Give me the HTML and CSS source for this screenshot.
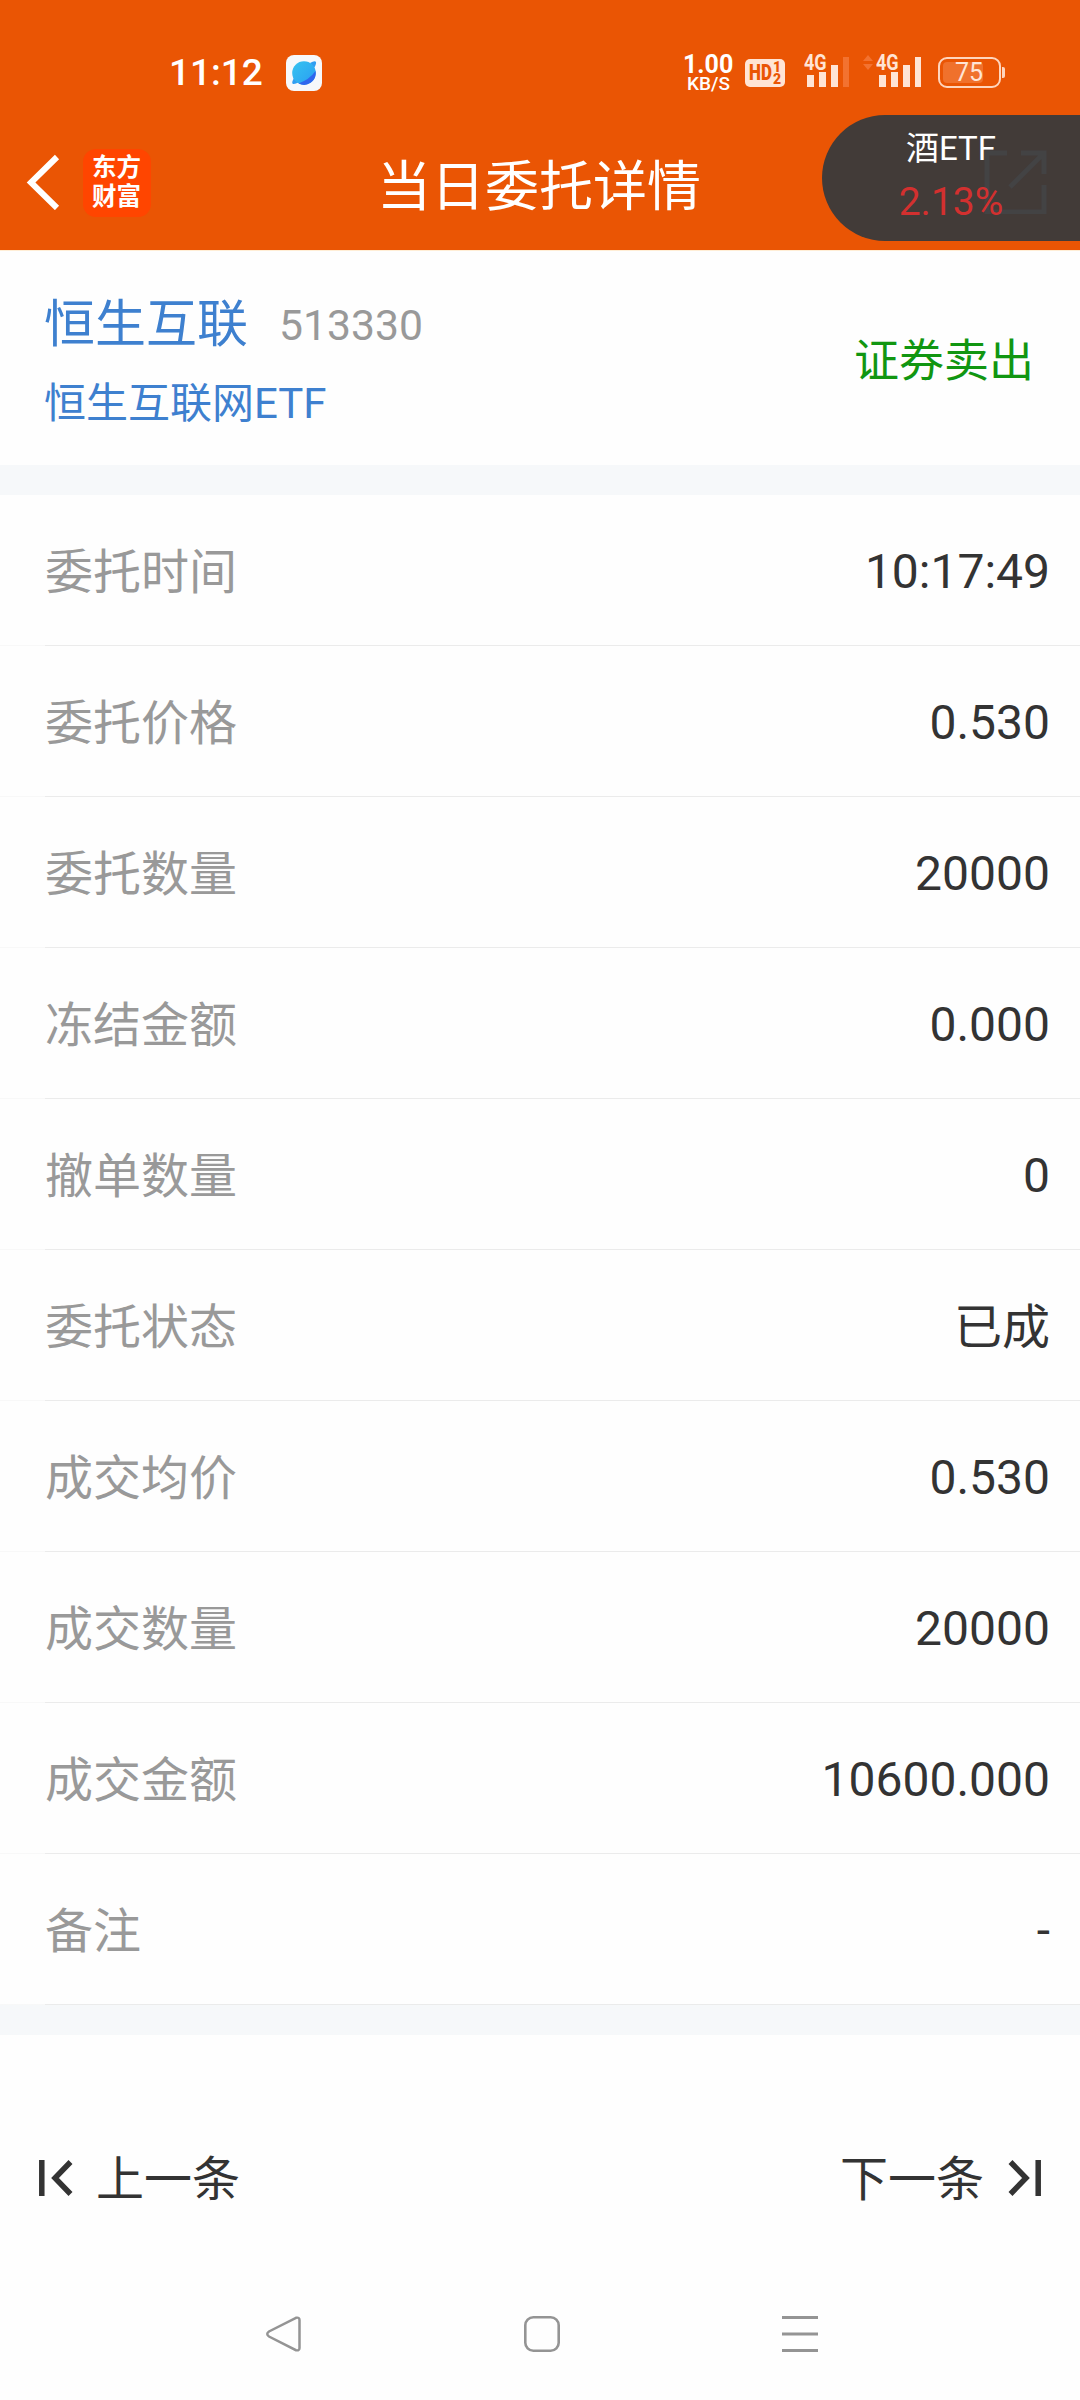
FILE: index.html
```
<!DOCTYPE html>
<html lang="zh-CN">
<head>
    <meta charset="UTF-8">
    <meta name="viewport" content="width=device-width, initial-scale=1.0">
    <title>当日委托详情</title>
    <link rel="stylesheet" href="styles.css">
</head>
<body>
    <header class="header">
        <div class="status-bar">
            <span class="clock">11:12</span>
            <svg class="browser-icon" width="36" height="36" viewBox="0 0 36 36">
                <defs>
                    <linearGradient id="planet" x1="0" y1="0" x2="1" y2="1">
                        <stop offset="0" stop-color="#35c3f0"/>
                        <stop offset="1" stop-color="#2a9df2"/>
                    </linearGradient>
                </defs>
                <rect width="36" height="36" rx="8" fill="#f6f8fb"/>
                <path d="M24 8q5-3 6-1q.5 2-2 6zM8 23q-3 5-1 6q2 .5 6-2z" fill="#2f9df2"/>
                <circle cx="18" cy="18" r="11.8" fill="url(#planet)"/>
                <path d="M29.6 16A11.8 11.8 0 0 1 12.500 28.400Q23 25 29.600 16z" fill="#2f66ee"/>
            </svg>
            <div class="net-speed">
                <span class="speed">1.00</span>
                <span class="unit">KB/S</span>
            </div>
            <div class="hd">
                <span>HD</span>
                <div class="hd-nums"><i>1</i><i>2</i></div>
            </div>
            <div class="signal">
                <span>4G</span>
                <svg width="46" height="32" viewBox="0 0 46 32">
                    <path d="M3 20h7v12H3zM15 17h7v15h-7zM27 10h7v22h-7z" fill="#ffe4d5"/>
                    <path d="M39 2h6v30h-6z" fill="#f37230"/>
                </svg>
            </div>
            <svg class="arrows" width="10" height="16" viewBox="0 0 10 16">
                <path d="M5 0l5 6H0zM0 9h10l-5 6z" fill="#f37230"/>
            </svg>
            <div class="signal second">
                <span>4G</span>
                <svg width="46" height="32" viewBox="0 0 46 32">
                    <path d="M3 20h7v12H3zM15 17h7v15h-7zM27 10h7v22h-7zM39 2h6v30h-6z" fill="#ffe4d5"/>
                </svg>
            </div>
            <div class="battery"><span>75</span></div>
        </div>

        <div class="title-bar">
            <svg class="back" width="36" height="56" viewBox="0 0 36 56">
                <path d="M31 3L5 28.500L31 54" fill="none" stroke="#fff" stroke-width="6"/>
            </svg>
            <div class="logo">东方<br>财富</div>
            <h1>当日委托详情</h1>
        </div>

        <div class="float-quote">
            <svg class="share" width="64" height="64" viewBox="0 0 64 64">
                <path d="M23 3H3v59h57V35M37 3h23v21M60 3L26 37" fill="none" stroke="#434344" stroke-width="5"/>
            </svg>
            <span class="quote-name">酒ETF</span>
            <span class="quote-rate">2.13%</span>
        </div>
    </header>

    <section class="stock">
        <div>
            <div class="stock-line">
                <span class="stock-name">恒生互联</span>
                <span class="stock-code">513330</span>
            </div>
            <div class="stock-full">恒生互联网ETF</div>
        </div>
        <div class="side">证券卖出</div>
    </section>

    <ul class="detail">
        <li><span>委托时间</span><b>10:17:49</b></li>
        <li><span>委托价格</span><b>0.530</b></li>
        <li><span>委托数量</span><b>20000</b></li>
        <li><span>冻结金额</span><b>0.000</b></li>
        <li><span>撤单数量</span><b>0</b></li>
        <li><span>委托状态</span><b class="state">已成</b></li>
        <li><span>成交均价</span><b>0.530</b></li>
        <li><span>成交数量</span><b>20000</b></li>
        <li><span>成交金额</span><b>10600.000</b></li>
        <li><span>备注</span><b>-</b></li>
    </ul>

    <div class="pager">
        <a class="prev">
            <svg width="34" height="36" viewBox="0 0 34 36">
                <path d="M2.800 0v36M31.500 2L16 18L31.500 34" fill="none" stroke="#333" stroke-width="5.500"/>
            </svg>
            <span>上一条</span>
        </a>
        <a class="next">
            <span>下一条</span>
            <svg width="34" height="36" viewBox="0 0 34 36">
                <path d="M30.200 0v36M2.500 2L18 18L2.500 34" fill="none" stroke="#333" stroke-width="5.500"/>
            </svg>
        </a>
    </div>

    <nav class="system-nav">
        <svg width="36" height="36" viewBox="0 0 36 36">
            <path d="M30 1.800L3 15.500Q-.5 18 3 20.500L30 34.200Q33.500 35 33.500 32V4Q33.500 1 30 1.800z" fill="none" stroke="#949494" stroke-width="2.500"/>
        </svg>
        <svg width="36" height="36" viewBox="0 0 36 36">
            <rect x="1.300" y="1.300" width="33.400" height="33.400" rx="8" fill="none" stroke="#949494" stroke-width="2.600"/>
        </svg>
        <svg width="36" height="36" viewBox="0 0 36 36">
            <path d="M0 1.500h36M0 18h36M0 34.500h36" stroke="#949494" stroke-width="3"/>
        </svg>
    </nav>
</body>
</html>
```
FILE: styles.css
```
* {
    box-sizing: border-box;
}

body, html {
    margin: 0;
    padding: 0;
    height: 2400px;
    overflow: hidden;
    font-family: Roboto, 'Noto Sans CJK SC', sans-serif;
    color: #333;
    background: #fefefe;
}

svg {
    display: block;
    flex-shrink: 0;
}

/* Header */
.header {
    position: relative;
    height: 251px;
    background: #ea5504;
    border-bottom: 1px solid #ffeed6;
    color: #fff;
}

.status-bar {
    display: flex;
    height: 115px;
    padding: 55px 0 0 169px;
}

.clock {
    width: 117px;
    font-size: 37px;
    font-weight: 500;
    line-height: 36px;
    white-space: nowrap;
}

.net-speed {
    width: 49px;
    margin-left: 361px;
    text-align: center;
    white-space: nowrap;
}

.speed {
    display: block;
    font-size: 25px;
    font-weight: 700;
    line-height: 19px;
}

.unit {
    display: block;
    padding-left: 2px;
    font-size: 19px;
    font-weight: 500;
    line-height: 19px;
}

.hd {
    display: flex;
    width: 40px;
    height: 28px;
    margin: 4px 0 0 13px;
    padding-left: 4px;
    border-radius: 5px;
    background: #ffe4d5;
    color: #ea5504;
    font-size: 22px;
    font-weight: 900;
    line-height: 28px;
}

.hd span {
    width: 24px;
    transform: scaleX(0.77);
    transform-origin: left;
}

.hd-nums i {
    display: block;
    font-size: 14px;
    font-style: normal;
    line-height: 12px;
}

.hd-nums i:first-child {
    margin-top: 2px;
}

.signal {
    position: relative;
    margin-left: 19px;
}

.signal span {
    position: absolute;
    top: -2px;
    left: 0;
    font-size: 22px;
    font-weight: 700;
    line-height: 20px;
    color: #ffe4d5;
    transform: scaleX(0.82);
    transform-origin: left;
}

.arrows {
    margin-left: 13px;
}

.signal.second {
    margin-left: 3px;
}

.battery {
    position: relative;
    width: 63px;
    height: 31px;
    margin: 2px 0 0 16px;
    padding: 3px;
    border: 2px solid #ffd5bd;
    border-radius: 9px;
}

.battery::after {
    content: '';
    position: absolute;
    top: 8px;
    right: -6px;
    width: 3px;
    height: 11px;
    border-radius: 0 2px 2px 0;
    background: #ffd5bd;
}

.battery span {
    display: block;
    width: 40px;
    height: 21px;
    padding-left: 12px;
    border-radius: 4px;
    background: #f0712c;
    font-size: 25px;
    line-height: 21px;
    color: #ffe4d5;
}

.title-bar {
    display: flex;
    align-items: flex-start;
    height: 135px;
    padding-top: 34px;
}

.back {
    margin: 5px 0 0 26px;
}

.logo {
    width: 68px;
    height: 68px;
    margin-left: 21px;
    padding: 4px 0 0 9px;
    border-radius: 13px;
    background: #ff4500;
    font-size: 24.5px;
    font-weight: 700;
    line-height: 29px;
    white-space: nowrap;
}

.title-bar h1 {
    margin: 7px 0 0 226px;
    font-size: 54px;
    font-weight: 400;
    line-height: 64px;
}

/* Floating quote */
.float-quote {
    position: absolute;
    top: 115px;
    right: 0;
    width: 258px;
    height: 126px;
    padding: 14px 0 0 0;
    border-radius: 63px 0 0 63px;
    background: #423b38;
    text-align: center;
}

.float-quote span {
    display: block;
    position: relative;
    white-space: nowrap;
}

.share {
    position: absolute;
    top: 35px;
    left: 162px;
}

.quote-name {
    font-size: 33px;
    line-height: 40px;
}

.quote-rate {
    margin-top: 9px;
    font-size: 39px;
    line-height: 48px;
    color: #d3302f;
}

/* Stock summary */
.stock {
    display: flex;
    justify-content: space-between;
    height: 214px;
    padding: 42px 46px 0 44px;
}

.stock-line {
    display: flex;
    align-items: baseline;
    line-height: 64px;
}

.stock-name {
    font-size: 51px;
    color: #3e80cf;
}

.stock-code {
    position: relative;
    top: -2px;
    margin-left: 31px;
    font-size: 42.7px;
    color: #999;
}

.stock-full {
    margin-top: 17px;
    font-size: 42px;
    line-height: 56px;
    color: #3e80cf;
}

.side {
    margin-top: 37px;
    font-size: 45px;
    line-height: 64px;
    color: #119611;
}

/* Order details */
.detail {
    list-style: none;
    margin: 0;
    padding: 0;
    border-top: 30px solid #f6f8fa;
    border-bottom: 30px solid #f6f8fa;
}

.detail li {
    position: relative;
    display: flex;
    justify-content: space-between;
    align-items: center;
    height: 151px;
    padding: 3px 30px 0 45px;
    font-size: 48px;
    line-height: 64px;
}

.detail li::after {
    content: '';
    position: absolute;
    left: 0;
    right: 0;
    bottom: 0;
    height: 1px;
    background: linear-gradient(to right, #f8f8f8 45px, #ebebeb 45px);
}

.detail span {
    padding-top: 2px;
    color: #999;
}

.detail b {
    font-weight: 400;
}

.detail .state {
    padding-top: 2px;
}

/* Prev / next */
.pager {
    display: flex;
    justify-content: space-between;
    padding: 111px 38px 0 39px;
}

.pager a {
    display: flex;
    align-items: center;
    font-size: 48px;
}

.pager span {
    padding-top: 2px;
    line-height: 64px;
    margin-bottom: -2px;
}

.prev svg {
    margin-right: 23px;
}

.next svg {
    margin-left: 24px;
}

/* System navigation */
.system-nav {
    display: flex;
    justify-content: space-between;
    padding: 106px 262px 0 266px;
}
```
